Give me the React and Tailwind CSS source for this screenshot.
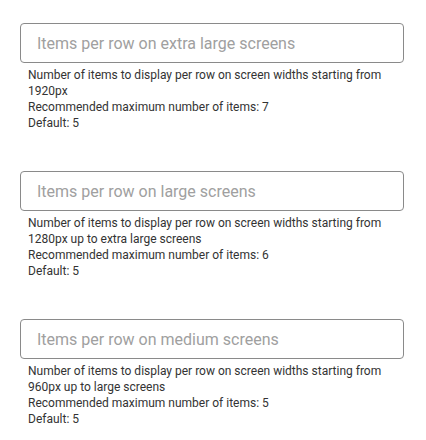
import React from 'react';

const fields = [
  {
    label: 'Items per row on extra large screens',
    help: 'Number of items to display per row on screen widths starting from 1920px',
    max: 7,
  },
  {
    label: 'Items per row on large screens',
    help: 'Number of items to display per row on screen widths starting from 1280px up to extra large screens',
    max: 6,
  },
  {
    label: 'Items per row on medium screens',
    help: 'Number of items to display per row on screen widths starting from 960px up to large screens',
    max: 5,
  },
];

export default function App() {
  return (
    <div className="bg-white w-[426px] h-[440px] overflow-hidden pt-[23px] font-['Roboto',sans-serif]">
      {fields.map((f) => (
        <div key={f.label} className="ml-[20px] w-[384px] mb-[40px]">
          <input
            type="text"
            placeholder={f.label}
            className="w-full h-[40px] rounded-[4px] border border-[#8a8a8a] px-4 text-[16px] text-[#333] placeholder:text-[#a0a0a0] outline-none"
          />
          <div className="mt-[4px] pl-[8px] pr-[10px] text-[12px] leading-[16px] text-[#333]">
            <div>{f.help}</div>
            <div>Recommended maximum number of items: {f.max}</div>
            <div>Default: 5</div>
          </div>
        </div>
      ))}
    </div>
  );
}
